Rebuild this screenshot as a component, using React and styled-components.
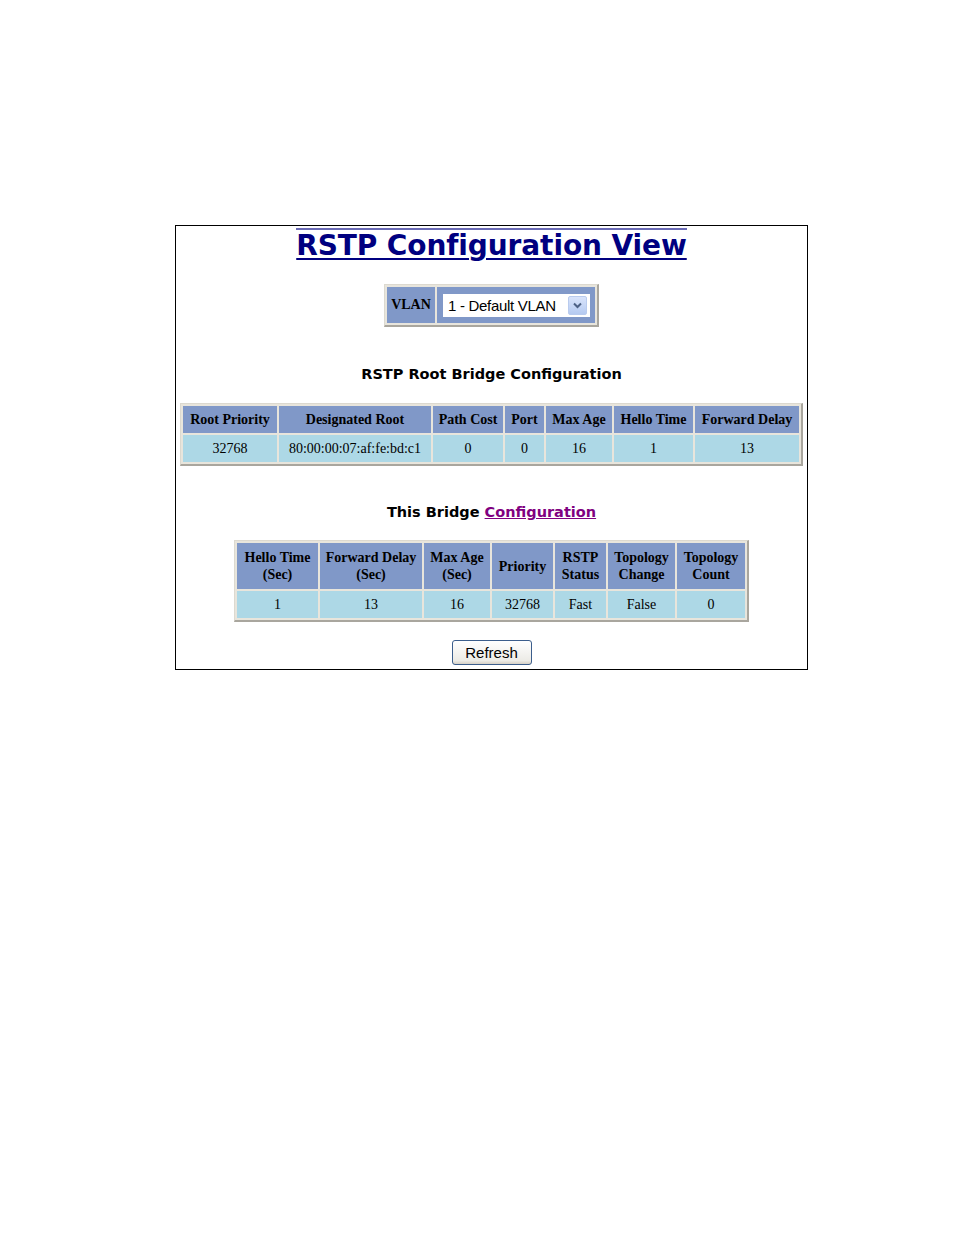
import React from "react";
import styled, { createGlobalStyle } from "styled-components";

const Global = createGlobalStyle`
  html, body { margin: 0; padding: 0; background: #ffffff; }
  body { font-family: "Liberation Serif", "Times New Roman", serif; }
`;

const Page = styled.div`
  padding: 225px 0 0 175px;
  min-height: 1235px;
  box-sizing: border-box;
`;

const Frame = styled.div`
  width: 633px;
  box-sizing: border-box;
  border: 1px solid #000000;
  display: flex;
  flex-direction: column;
  align-items: center;
  padding: 2px 0 4px;
`;

const Title = styled.h1`
  margin: 0;
  display: inline-block;
  border-top: 2px solid #6a6ab4;
  font-family: "DejaVu Sans", Verdana, sans-serif;
  font-weight: bold;
  font-size: 28px;
  letter-spacing: -0.1px;
  line-height: 32px;
  color: #000080;
  text-decoration: underline;
  text-decoration-thickness: 2px;
  text-underline-offset: 3px;
`;

const Grid = styled.table`
  border-collapse: separate;
  border-spacing: 2px;
  background: #e8e5dc;
  border-top: 1px solid #dcd9d0;
  border-left: 1px solid #dcd9d0;
  border-right: 2px solid #a9a69e;
  border-bottom: 2px solid #a9a69e;
  margin-top: ${(p) => p.$mt}px;
`;

const Head = styled.th`
  background: #8098c8;
  color: #000000;
  font-family: "Liberation Serif", "Times New Roman", serif;
  font-weight: bold;
  font-size: 14px;
  line-height: 17px;
  padding: ${(p) => (p.$tall ? "6px 3px" : "5px 3px")};
  text-align: center;
  white-space: nowrap;
  width: ${(p) => (p.$w ? `${p.$w}px` : "auto")};
  box-sizing: border-box;
`;

const Cell = styled.td`
  background: #add8e6;
  color: #000000;
  font-family: "Liberation Serif", "Times New Roman", serif;
  font-size: 14px;
  line-height: 17px;
  padding: 5px 3px;
  text-align: center;
  white-space: nowrap;
`;

const VlanHead = styled.th`
  background: #8098c8;
  font-family: "Liberation Serif", "Times New Roman", serif;
  font-weight: bold;
  font-size: 14px;
  padding: 0 3px;
  width: 48px;
  box-sizing: border-box;
  height: 36px;
`;

const VlanCell = styled.td`
  background: #8098c8;
  padding: 0 5px 0 6px;
  height: 36px;
`;

const SelectBox = styled.div`
  position: relative;
  width: 147px;
  height: 23px;
  box-sizing: border-box;
  background: #ffffff;
  border: 1px solid #ffffff;
  display: flex;
  align-items: center;
  font-family: "Liberation Sans", Arial, sans-serif;
  font-size: 15px;
  color: #000000;
  padding-left: 4px;
  letter-spacing: -0.3px;
`;

const ArrowBtn = styled.div`
  position: absolute;
  right: 2px;
  top: 1px;
  width: 19px;
  height: 19px;
  box-sizing: border-box;
  border: 1px solid #b9cbee;
  border-radius: 2px;
  background: linear-gradient(#d9e4fb, #b5caf1);
  display: flex;
  align-items: center;
  justify-content: center;
`;

const SectionTitle = styled.div`
  font-family: "DejaVu Sans", Verdana, sans-serif;
  font-weight: bold;
  font-size: 14.5px;
  letter-spacing: 0px;
  color: #000000;
  margin-top: ${(p) => p.$mt}px;
  line-height: 18px;
`;

const Link = styled.a`
  color: #800080;
  text-decoration: underline;
  cursor: pointer;
`;

const RefreshButton = styled.button`
  margin-top: 18px;
  width: 80px;
  height: 25px;
  font-family: "Liberation Sans", Arial, sans-serif;
  font-size: 15px;
  color: #000000;
  background: linear-gradient(#ffffff, #ecebe6 85%, #d6d0c5);
  border: 1px solid #3c5e8c;
  border-radius: 3px;
  padding: 0;
`;

const Chevron = () => (
  <svg width="9" height="7" viewBox="0 0 9 7">
    <path d="M1 1.5 L4.5 5 L8 1.5" fill="none" stroke="#4d6185" strokeWidth="2" />
  </svg>
);

const rootCols = [
  { h: "Root Priority", v: "32768", w: 94 },
  { h: "Designated Root", v: "80:00:00:07:af:fe:bd:c1", w: 152 },
  { h: "Path Cost", v: "0", w: 70 },
  { h: "Port", v: "0", w: 39 },
  { h: "Max Age", v: "16", w: 66 },
  { h: "Hello Time", v: "1", w: 79 },
  { h: "Forward Delay", v: "13", w: 104 },
];

const bridgeCols = [
  { h: ["Hello Time", "(Sec)"], v: "1", w: 81 },
  { h: ["Forward Delay", "(Sec)"], v: "13", w: 102 },
  { h: ["Max Age", "(Sec)"], v: "16", w: 66 },
  { h: ["Priority"], v: "32768", w: 61 },
  { h: ["RSTP", "Status"], v: "Fast", w: 51 },
  { h: ["Topology", "Change"], v: "False", w: 67 },
  { h: ["Topology", "Count"], v: "0", w: 68 },
];

export default function App() {
  return (
    <>
      <Global />
      <Page>
        <Frame>
          <Title>RSTP Configuration View</Title>

          <Grid $mt={22}>
            <tbody>
              <tr>
                <VlanHead>VLAN</VlanHead>
                <VlanCell>
                  <SelectBox>
                    1 - Default VLAN
                    <ArrowBtn>
                      <Chevron />
                    </ArrowBtn>
                  </SelectBox>
                </VlanCell>
              </tr>
            </tbody>
          </Grid>

          <SectionTitle $mt={38}>RSTP Root Bridge Configuration</SectionTitle>

          <Grid $mt={20}>
            <tbody>
              <tr>
                {rootCols.map((c) => (
                  <Head key={c.h} $w={c.w}>
                    {c.h}
                  </Head>
                ))}
              </tr>
              <tr>
                {rootCols.map((c) => (
                  <Cell key={c.h}>{c.v}</Cell>
                ))}
              </tr>
            </tbody>
          </Grid>

          <SectionTitle $mt={37}>
            This Bridge <Link>Configuration</Link>
          </SectionTitle>

          <Grid $mt={19}>
            <tbody>
              <tr>
                {bridgeCols.map((c) => (
                  <Head key={c.h.join()} $w={c.w} $tall>
                    {c.h.map((line, i) => (
                      <React.Fragment key={i}>
                        {i > 0 && <br />}
                        {line}
                      </React.Fragment>
                    ))}
                  </Head>
                ))}
              </tr>
              <tr>
                {bridgeCols.map((c) => (
                  <Cell key={c.h.join()}>{c.v}</Cell>
                ))}
              </tr>
            </tbody>
          </Grid>

          <RefreshButton>Refresh</RefreshButton>
        </Frame>
      </Page>
    </>
  );
}
